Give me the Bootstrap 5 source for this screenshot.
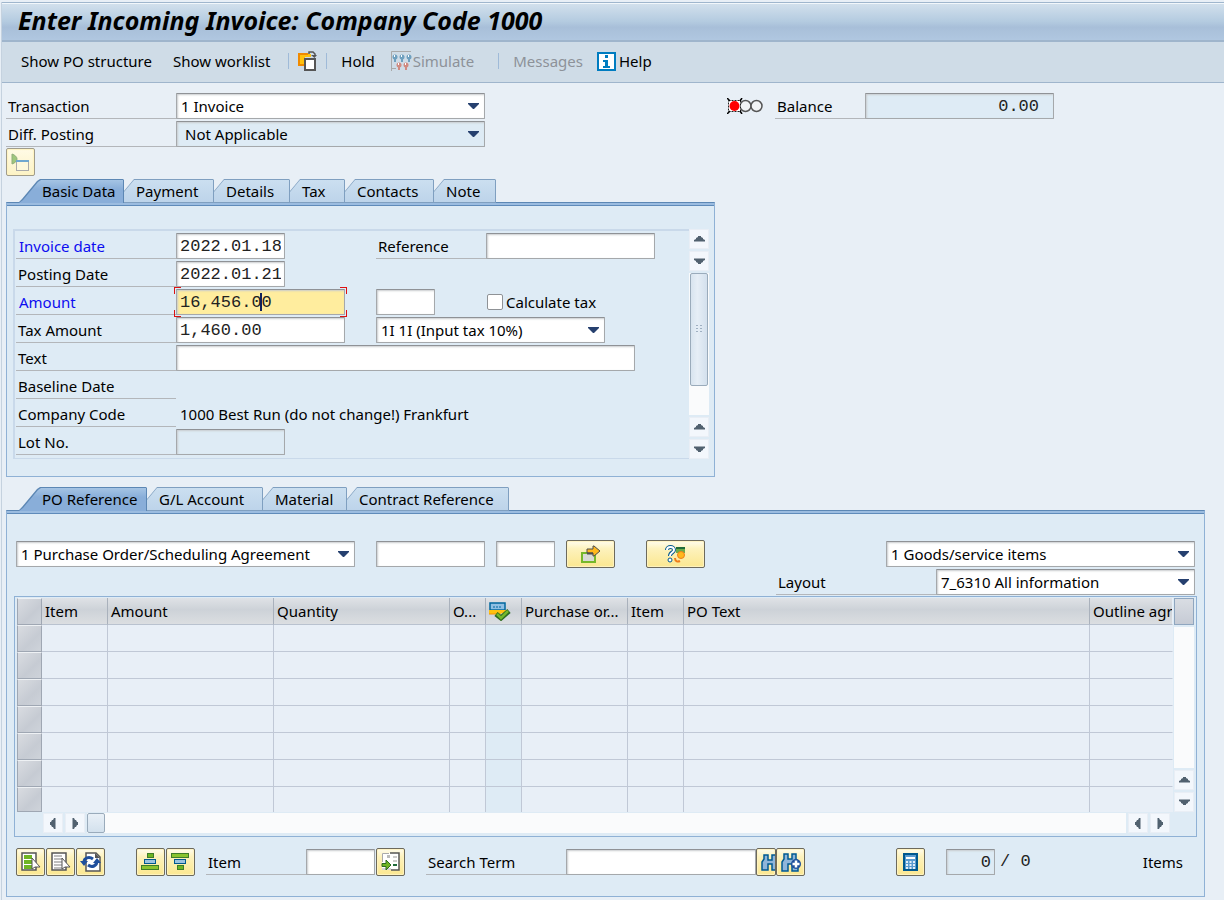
<!DOCTYPE html>
<html lang="en">
<head>
<meta charset="utf-8">
<meta name="viewport" content="width=device-width, initial-scale=1">
<title>Enter Incoming Invoice: Company Code 1000</title>
<link href="https://cdn.jsdelivr.net/npm/bootstrap@5.3.0/dist/css/bootstrap.min.css" rel="stylesheet">
<style>
:root{--ui:"Noto Sans","Open Sans",sans-serif;--num:"Liberation Mono",monospace;--line:#8fb1d5;--rule:#b3b6ba;--panel:#deebf5}
body{background:#e8eff6;color:#000;font:15px/20px var(--ui)}
svg{display:block;flex:none}
.frame{border-left:1px solid #c5d2df;margin-left:1px;padding-bottom:3px}
.titlebar{height:40px;margin-top:2px;padding:0 16px;border-top:1px solid #9fb6cd;border-bottom:2px solid #9fb5cc;box-shadow:inset 0 1px #f2f7fb;background:linear-gradient(#d3e1ed,#b4cbe0 50%,#a8bfd9 65%,#b0c7e0)}
.titlebar h1{font-size:25px;line-height:34px;font-weight:700;font-style:italic;margin:0}
.tools{height:41px;padding:0 0 2px 19px;background:#cfdce7;border-bottom:1px solid #9fb5cc}
.tool{border:0;background:none;padding:0;line-height:20px;color:#000;display:flex;align-items:center}
.tool:disabled{color:#8d9299}
.sep{width:1px;height:16px;background:#9fbad8}
.page{padding:10px 19px 0 4px}
.line{display:flex;height:26px;margin-bottom:2px}
.lab{border-bottom:1px solid var(--rule);padding-left:2px;height:26px;line-height:26px;flex:none;white-space:nowrap}
.lab.req{color:#0d0df0;padding-left:3px}
.plain{line-height:26px;padding-left:4px;white-space:nowrap}
.fld,.cmb{border:1px solid #a5a8ab;border-top-color:#8f9296;border-radius:1px;background-color:#fff;height:26px;padding:0 3px;box-shadow:inset 1px 1px 2px #c9cccf;color:#000;flex:none;outline:0;min-width:0}
.fld,.mono{font:17px/22px var(--num);color:#222}
.mono{line-height:28px}
.cmb{font:15px/22px var(--ui);appearance:none;padding:0 20px 0 4px;background:#fff url("data:image/svg+xml,%3Csvg xmlns='http://www.w3.org/2000/svg' width='11' height='6'%3E%3Cpath d='M0 0h11v1L6 6H5L0 1z' fill='%2326406f'/%3E%3C/svg%3E") no-repeat right 5px center}
.cmb:disabled{opacity:1;padding-left:8px}
.cmb:disabled,.ro{background-color:var(--panel)}
.bal{padding-right:14px}
.w49{width:49px}.w59{width:59px}.w69{width:69px}.w109{width:109px}.w169{width:169px}.w189{width:189px}.w190{width:190px}.w229{width:229px}.w259{width:259px}.w309{width:309px}.w339{width:339px}.w459{width:459px}
.l90{width:90px}.l100{width:100px}.l110{width:110px}.l140{width:140px}.l160{width:160px}.l170{width:170px}
.g1{margin-left:1px}.g3{margin-left:3px}.g5{margin-left:5px}.g9{margin-left:9px}.g11{margin-left:11px}.g14{margin-left:14px}.g18{margin-left:18px}.g21{margin-left:21px}.g31{margin-left:31px}.g91{margin-left:91px}.g242{margin-left:242px}
.tight{gap:1px}
.sbtn{width:29px;height:28px;flex:none;border:1px solid #6d6a5c;border-radius:2px;padding:0;display:flex;align-items:center;justify-content:center;background:linear-gradient(#fffdf0,#fdf2bd 30%,#fbe78f);box-shadow:inset 0 0 1px 1px #fff3c0}
.sbtn.pale{border-color:#a09c8b;background:linear-gradient(#fffbe6,#fcf3c6)}
.sbtn.w-go{width:49px}.sbtn.w-ask{width:59px}
.folder{margin-top:1px;margin-bottom:3px}
/* folder tabs: outline colour below, fill inset by one pixel above */
.strip{padding-left:12px;flex-wrap:nowrap}
.strip .nav-link{position:relative;isolation:isolate;height:24px;margin-bottom:-1px;border:0;border-radius:0;color:#000;line-height:24px;padding:0 0 0 12px;text-align:left;white-space:nowrap;background:#7f9fc0;clip-path:polygon(0 100%,0 12px,10px 0,calc(100% - 1px) 0,100% 1px,100% 100%)}
.strip .nav-link::before{content:"";position:absolute;inset:1px 1px 1px 0;z-index:-1;background:linear-gradient(#cbdff0,#bdd4ea);clip-path:polygon(0 100%,0 12px,10px 0,100% 0,100% 100%)}
.strip .nav-link.active{padding-left:24px;background:#5c87b4;clip-path:polygon(0 100%,4px 20px,19px 2px,22px 0,calc(100% - 1px) 0,100% 1px,100% 100%);z-index:2}
.strip .nav-link.active::before{background:linear-gradient(#a5c4e4,#89aed9 40%);inset:1px 1px 0 0;clip-path:polygon(1px 100%,5px 20px,20px 2px,23px 0,100% 0,100% 100%)}
.t55{width:55px}.t62{width:62px}.t76{width:76px}.t84{width:84px}.t89{width:89px}.t90{width:90px}.t106{width:106px}.t116{width:116px}.t129{width:129px}.t162{width:162px}
.pane{background:var(--panel);border:1px solid var(--line);border-top-color:#5c87b4;box-shadow:inset 0 2px #9bbce0,inset 0 3px #5f8bba}
.basic{max-width:709px;padding:26px 5px 17px 6px;margin-bottom:10px}
.inner{border:1px solid #c9d9ea;border-width:2px 0 1px 2px;padding:2px 0 3px 1px}
.inner .line{display:grid;grid-template-columns:160px 200px auto;justify-content:start}
.inner .line:last-child{margin-bottom:0}
.focus{position:relative;width:169px}
.focus .fld{background-color:#ffed9e}
.focus::before{content:"";position:absolute;inset:-2px;pointer-events:none;--r:#d11;background:linear-gradient(var(--r),var(--r)) 0 0/7px 1px,linear-gradient(var(--r),var(--r)) 0 0/1px 7px,linear-gradient(var(--r),var(--r)) 100% 0/7px 1px,linear-gradient(var(--r),var(--r)) 100% 0/1px 7px,linear-gradient(var(--r),var(--r)) 0 100%/7px 1px,linear-gradient(var(--r),var(--r)) 0 100%/1px 7px,linear-gradient(var(--r),var(--r)) 100% 100%/7px 1px,linear-gradient(var(--r),var(--r)) 100% 100%/1px 7px;background-repeat:no-repeat}
.focus::after{content:"";position:absolute;left:84px;top:4px;width:2px;height:18px;background:#10205c}
.chk{appearance:none;width:16px;height:16px;margin:0 3px 0 52px;border:1px solid #8f9296;border-radius:2px;background:#fff}
.sb{width:20px;gap:2px}
.arr{border:1px solid #e9eef5;background:#f3f7fc;width:20px;height:20px;padding:0;flex:none;display:flex;align-items:center;justify-content:center}
.track{background:#fafbfc}
.thumb{border:1px solid #9aabbb;border-radius:2px;background:linear-gradient(90deg,#d8e4ef,#e6eef6 40%,#d3e0ed);width:18px;margin-left:1px;height:113px;display:flex;align-items:center;justify-content:center}
.thumb.hz{margin:0;height:20px;background:linear-gradient(#e9f0f7,#d3e1ed)}
.hbar{gap:2px;padding:1px 24px 0 26px}
.po{padding:29px 9px 20px 9px}
.picks{padding:1px 0}
.box{border:1px solid var(--line);padding:1px 2px 3px 2px;margin:0 -2px 11px -2px}
.items{table-layout:fixed;width:100%;border-collapse:separate;border-spacing:0}
.items th{height:27px;padding:0 0 0 3px;font-weight:400;white-space:nowrap;overflow:hidden;border-right:1px solid #a9b1bc;border-bottom:1px solid #b9c2cf;background:linear-gradient(#dfe2e6,#cdd2d8 45%,#dbdee1)}
.items td{height:27px;padding:0;background:#e8eff7;border-right:1px solid #c0c8d6;border-bottom:1px solid #c0c8d6}
.items th:last-child,.items td:last-child{border-right-color:#e8eff7}
.items tr:last-child td{border-bottom:0;height:25px}
.items td.mk{background:#deebf5}
.items td.sel,.items th.sel{background:linear-gradient(135deg,#d9dce1,#c6cbd3 60%,#ced3da);border:1px solid #9fa7b3;border-top-color:#eef1f4}
.items tr:last-child td.sel{border-bottom:1px solid #9fa7b3}
.c0{width:25px}.c1{width:66px}.c2{width:166px}.c3{width:176px}.c4{width:36px}.c6{width:106px}.c7{width:56px}.c9{width:83px}
.corner{height:27px;border:1px solid #8fa6bf;background:linear-gradient(#d9dde3,#c6cbd5)}
.sbtn.cut{width:20px;overflow:hidden;justify-content:flex-start;padding-left:3px}
</style>
</head>
<body>
<svg width="0" height="0" class="position-absolute" aria-hidden="true">
<symbol id="up" viewBox="0 0 11 6"><path d="M0 5.500V4l2-1V2l2-1V0h3v1l2 1v1l2 1v1.500z" fill="#51616f"/></symbol>
<symbol id="dn" viewBox="0 0 11 6"><path d="M0 .5V2l2 1v1l2 1v1h3V5l2-1V3l2-1V.5z" fill="#51616f"/></symbol>
<symbol id="lt" viewBox="0 0 6 11"><path d="M5.500 0H4L3 2H2L1 4H0v3h1l1 2h1l1 2h1.500z" fill="#51616f"/></symbol>
<symbol id="rt" viewBox="0 0 6 11"><path d="M.5 0H2l1 2h1l1 2h1v3H5L4 9H3l-1 2H.5z" fill="#51616f"/></symbol>
</svg>
<div class="frame">
<header>
  <div class="titlebar"><h1>Enter Incoming Invoice: Company Code 1000</h1></div>
  <div class="tools d-flex align-items-center" role="toolbar">
    <button class="tool">Show PO structure</button>
    <button class="tool g21">Show worklist</button>
    <span class="sep g18"></span>
    <button class="tool g9" aria-label="Other invoice document">
      <svg width="20" height="22" viewBox="0 0 20 22"><path d="M1 4h12v3H7v8H1z" fill="#ffc20e"/><path d="M7 15H1V4h9" fill="none" stroke="#f08a00" stroke-width="2"/><rect x="7" y="9" width="10" height="11" fill="#fff" stroke="#555" stroke-width="2"/><path d="M11 4V2h4l2 2v2" fill="none" stroke="#555" stroke-width="1.500"/><path d="M13 5h6l-2.500 3z" fill="#555"/></svg></button>
    <span class="sep ms-2"></span>
    <button class="tool g14">Hold</button>
    <button class="tool ms-3" disabled>
      <svg width="22" height="20" viewBox="0 0 22 20"><path d="M.5 20V.5H20M0 17.500h5" fill="none" stroke="#a9a9a9"/><g fill="#6fa0bf"><circle cx="4" cy="6" r="2.500"/><circle cx="11" cy="6" r="2.500"/><circle cx="18" cy="6" r="2.500"/><path d="M3 8h2v3H3zM10 8h2v3h-2zM17 8h2v3h-2z"/></g><g fill="#d08a80"><circle cx="8" cy="14" r="2.500"/><circle cx="15" cy="14" r="2.500"/><path d="M7 16h2v3H7zM14 16h2v3h-2z"/></g><g fill="#fff"><path d="M3 4h1v2H3zM10 4h1v2h-1zM17 4h1v2h-1zM7 12h1v2H7zM14 12h1v2h-1z"/></g></svg>Simulate</button>
    <span class="sep ms-4"></span>
    <button class="tool g14" disabled>Messages</button>
    <button class="tool g14">
      <svg width="19" height="19" viewBox="0 0 19 19"><rect x="1" y="1" width="17" height="17" fill="#fff" stroke="#007cc0" stroke-width="2"/><path d="M8 3h3v3H8zM6 8h5v6h2v2H6v-2h2v-4H6z" fill="#007cc0"/></svg><span class="g3">Help</span></button>
  </div>
</header>
<main class="page">
  <div class="line">
    <label class="lab l170" for="trans">Transaction</label>
    <select id="trans" class="cmb w309"><option>1 Invoice</option></select>
    <svg class="align-self-center g242" width="37" height="16" viewBox="0 0 37 16"><circle cx="18.500" cy="8" r="5.500" fill="#f1f3f5" stroke="#555" stroke-width="1.500"/><circle cx="29.500" cy="8" r="5.500" fill="#f1f3f5" stroke="#555" stroke-width="1.500"/><rect x="1.500" y="2.500" width="12" height="11" fill="#fff" stroke="#222" stroke-dasharray="2 1"/><path d="M0 0l3 3M0 16l3-3M13 3l2-3M13 13l2 3" stroke="#000" stroke-width="1.500"/><circle cx="7.500" cy="8" r="5" fill="#f00"/></svg>
    <label class="lab l90 g11" for="bal">Balance</label>
    <input id="bal" class="fld ro w189 text-end bal" value="0.00" readonly>
  </div>
  <div class="line mb-0">
    <label class="lab l170" for="diff">Diff. Posting</label>
    <select id="diff" class="cmb w309" disabled><option>Not Applicable</option></select>
  </div>
  <button class="sbtn pale folder" aria-label="Show document header">
    <svg width="19" height="19" viewBox="0 0 19 19"><path d="M1 1c3 1 5 3 5 5S4 10 1 11z" fill="#9fc77c" stroke="#8fae7a"/><rect x="5.500" y="7.500" width="12" height="10" fill="#fdf8dc" stroke="#aaa"/><path d="M5 8h13" stroke="#6fa7d0" stroke-width="2"/></svg></button>

  <ul class="nav strip" role="tablist">
    <li><button class="nav-link active t106" role="tab">Basic Data</button></li>
    <li><button class="nav-link t90" role="tab">Payment</button></li>
    <li><button class="nav-link t76" role="tab">Details</button></li>
    <li><button class="nav-link t55" role="tab">Tax</button></li>
    <li><button class="nav-link t89" role="tab">Contacts</button></li>
    <li><button class="nav-link t62" role="tab">Note</button></li>
  </ul>
  <section class="pane basic d-flex">
    <div class="inner flex-grow-1">
      <div class="line"><label class="lab l160 req" for="invd">Invoice date</label><input id="invd" class="fld w109" value="2022.01.18">
        <div class="d-flex"><label class="lab l110" for="ref">Reference</label><input id="ref" class="fld w169"></div></div>
      <div class="line"><label class="lab l160" for="posd">Posting Date</label><input id="posd" class="fld w109" value="2022.01.21"></div>
      <div class="line"><label class="lab l160 req" for="amt">Amount</label><div class="focus"><input id="amt" class="fld w169" value="16,456.00"></div>
        <div class="d-flex align-items-center"><input class="fld w59" aria-label="Currency"><input type="checkbox" class="chk" id="calc"><label for="calc">Calculate tax</label></div></div>
      <div class="line"><label class="lab l160" for="tax">Tax Amount</label><input id="tax" class="fld w169" value="1,460.00">
        <select class="cmb w229" aria-label="Tax code"><option>1I 1I (Input tax 10%)</option></select></div>
      <div class="line"><label class="lab l160" for="txt">Text</label><input id="txt" class="fld w459"></div>
      <div class="line"><span class="lab l160">Baseline Date</span></div>
      <div class="line"><span class="lab l160">Company Code</span><span class="plain">1000 Best Run (do not change!) Frankfurt</span></div>
      <div class="line"><label class="lab l160" for="lot">Lot No.</label><input id="lot" class="fld ro w109" readonly></div>
    </div>
    <div class="sb d-flex flex-column">
      <button class="arr" aria-label="Scroll up"><svg width="11" height="6"><use href="#up"/></svg></button>
      <button class="arr" aria-label="Scroll down"><svg width="11" height="6"><use href="#dn"/></svg></button>
      <div class="track flex-grow-1"><div class="thumb"><svg width="7" height="9" viewBox="0 0 7 9" fill="#9fb0c2"><path d="M0 0h2v1H0zM4 0h2v1H4zM0 3h2v1H0zM4 3h2v1H4zM0 6h2v1H0zM4 6h2v1H4z"/></svg></div></div>
      <button class="arr" aria-label="Page up"><svg width="11" height="6"><use href="#up"/></svg></button>
      <button class="arr" aria-label="Page down"><svg width="11" height="6"><use href="#dn"/></svg></button>
    </div>
  </section>

  <ul class="nav strip" role="tablist">
    <li><button class="nav-link active t129" role="tab">PO Reference</button></li>
    <li><button class="nav-link t116" role="tab">G/L Account</button></li>
    <li><button class="nav-link t84" role="tab">Material</button></li>
    <li><button class="nav-link t162" role="tab">Contract Reference</button></li>
  </ul>
  <section class="pane po">
    <div class="d-flex align-items-start">
      <div class="d-flex align-items-center">
        <select class="cmb w339" aria-label="Reference document category"><option>1 Purchase Order/Scheduling Agreement</option></select>
        <input class="fld w109 g21" aria-label="Purchase order">
        <input class="fld w59 g11" aria-label="Order item">
        <button class="sbtn w-go g11" aria-label="Adopt">
          <svg width="20" height="18" viewBox="0 0 20 18"><rect x="1" y="8" width="13" height="9" fill="#d9dbd5" stroke="#76b82a" stroke-width="2"/><path d="M6 4h6V1h1l6 5-6 5h-1V8H6z" fill="#ffb81c" stroke="#4d4d4d"/><path d="M6 8.500h6" stroke="#4d4d4d" stroke-width="2"/></svg></button>
        <button class="sbtn w-ask g31" aria-label="More search criteria">
          <svg width="21" height="18" viewBox="0 0 21 18"><rect x="11" y="2" width="9" height="6" fill="#6aab4a"/><path d="M11 3h9" stroke="#1f6b3a" stroke-width="2"/><circle cx="16" cy="10" r="3.500" fill="#ffb81c" stroke="#ef7d1a"/><path d="M10 13c0 4 3 4 5 3" fill="none" stroke="#ef7d1a" stroke-width="2"/><path d="M2 5c0-4 7-4 7 0 0 3-4 2-4 6" fill="none" stroke="#00588f" stroke-width="4"/><path d="M2 5c0-4 7-4 7 0 0 3-4 2-4 6" fill="none" stroke="#fff" stroke-width="2"/><circle cx="5" cy="15" r="2" fill="#fff" stroke="#00588f"/></svg></button>
      </div>
      <div class="ms-auto d-flex flex-column align-items-end picks">
        <div class="line"><select class="cmb w309" aria-label="Item type"><option>1 Goods/service items</option></select></div>
        <div class="line mb-0"><label class="lab l160" for="lay">Layout</label><select id="lay" class="cmb w259"><option>7_6310 All information</option></select></div>
      </div>
    </div>
    <div class="box">
      <div class="d-flex tight">
        <div class="flex-grow-1 overflow-hidden">
        <table class="items">
          <colgroup><col class="c0"><col class="c1"><col class="c2"><col class="c3"><col class="c4"><col class="c4"><col class="c6"><col class="c7"><col><col class="c9"></colgroup>
          <thead><tr><th class="sel"></th><th>Item</th><th>Amount</th><th>Quantity</th><th>O...</th><th><svg width="22" height="19" viewBox="0 0 22 19"><rect x="1" y="1" width="15" height="7" fill="#8fbfe3" stroke="#00679e" stroke-width="1.500"/><path d="M4 5h9" stroke="#00679e" stroke-dasharray="2 1"/><path d="M0 8h17v4l-4-1-4 3H8l1-2H0z" fill="#ffc20e"/><path d="M0 12h8l3 5" fill="none" stroke="#f39200"/><path d="M7 12l5 4 8-7" fill="none" stroke="#2d6b1f" stroke-width="5"/><path d="M8 12l4 4 7-7" fill="none" stroke="#76b82a" stroke-width="2.500"/></svg></th><th>Purchase or...</th><th>Item</th><th>PO Text</th><th>Outline agr</th></tr></thead>
          <tbody>
            <tr><td class="sel"></td><td></td><td></td><td></td><td></td><td class="mk"></td><td></td><td></td><td></td><td></td></tr>
            <tr><td class="sel"></td><td></td><td></td><td></td><td></td><td class="mk"></td><td></td><td></td><td></td><td></td></tr>
            <tr><td class="sel"></td><td></td><td></td><td></td><td></td><td class="mk"></td><td></td><td></td><td></td><td></td></tr>
            <tr><td class="sel"></td><td></td><td></td><td></td><td></td><td class="mk"></td><td></td><td></td><td></td><td></td></tr>
            <tr><td class="sel"></td><td></td><td></td><td></td><td></td><td class="mk"></td><td></td><td></td><td></td><td></td></tr>
            <tr><td class="sel"></td><td></td><td></td><td></td><td></td><td class="mk"></td><td></td><td></td><td></td><td></td></tr>
            <tr><td class="sel"></td><td></td><td></td><td></td><td></td><td class="mk"></td><td></td><td></td><td></td><td></td></tr>
          </tbody>
        </table>
        </div>
        <div class="sb d-flex flex-column">
          <div class="corner"></div>
          <div class="track flex-grow-1"></div>
          <button class="arr" aria-label="Scroll up"><svg width="11" height="6"><use href="#up"/></svg></button>
          <button class="arr" aria-label="Scroll down"><svg width="11" height="6"><use href="#dn"/></svg></button>
        </div>
      </div>
      <div class="d-flex hbar">
        <button class="arr" aria-label="Scroll left"><svg width="6" height="11"><use href="#lt"/></svg></button>
        <button class="arr" aria-label="Scroll right"><svg width="6" height="11"><use href="#rt"/></svg></button>
        <div class="track flex-grow-1"><div class="thumb hz"></div></div>
        <button class="arr" aria-label="Page left"><svg width="6" height="11"><use href="#lt"/></svg></button>
        <button class="arr" aria-label="Page right"><svg width="6" height="11"><use href="#rt"/></svg></button>
      </div>
    </div>
    <div class="d-flex align-items-center">
      <div class="d-flex tight">
        <button class="sbtn" aria-label="Select all"><svg width="20" height="20" viewBox="0 0 20 20"><rect x="1" y="1" width="14" height="17" fill="#fff" stroke="#555" stroke-width="1.500"/><path d="M3 3h8v4H3zM3 8h8v4H3zM3 13h8v4H3z" fill="#6fb522"/><path d="M11 6v11l3-2h5z" fill="#fff" stroke="#555"/></svg></button>
        <button class="sbtn" aria-label="Deselect all"><svg width="20" height="20" viewBox="0 0 20 20"><rect x="1" y="1" width="14" height="17" fill="#fff" stroke="#555" stroke-width="1.500"/><path d="M3 4h8M3 7h8M3 10h8M3 13h8M3 16h8" stroke="#aaa" stroke-width="1.500"/><path d="M11 6v11l3-2h5z" fill="#fff" stroke="#555"/></svg></button>
        <button class="sbtn" aria-label="Refresh"><svg width="22" height="20" viewBox="0 0 22 20"><path d="M6 1h10l4 4v14H6z" fill="#fff" stroke="#555" stroke-width="1.500"/><path d="M15 1v5h5" fill="#555"/><path d="M4 10c0-4 5-6 9-3M17 9c0 5-5 7-9 4" fill="none" stroke="#1f4f9c" stroke-width="3"/><path d="M0 9h8l-4 5zM13 11h8l-4-5z" fill="#1f4f9c"/></svg></button>
      </div>
      <div class="d-flex tight g31">
        <button class="sbtn" aria-label="Sort ascending"><svg width="19" height="18" viewBox="0 0 19 18"><rect x="6.500" y=".5" width="6" height="4" fill="#6fb522" stroke="#3f7d2a"/><rect x="3.500" y="6.500" width="11" height="4" fill="#9cc3e0" stroke="#00588f"/><rect x=".5" y="12.500" width="17" height="4" fill="#8ac42e" stroke="#3f7d2a"/></svg></button>
        <button class="sbtn" aria-label="Sort descending"><svg width="19" height="18" viewBox="0 0 19 18"><rect x=".5" y=".5" width="17" height="4" fill="#8ac42e" stroke="#3f7d2a"/><rect x="3.500" y="6.500" width="11" height="4" fill="#9cc3e0" stroke="#00588f"/><rect x="6.500" y="12.500" width="6" height="4" fill="#6fb522" stroke="#3f7d2a"/></svg></button>
      </div>
      <label class="lab l100 g11" for="itm">Item</label><input id="itm" class="fld w69">
      <button class="sbtn g1" aria-label="Position"><svg width="20" height="20" viewBox="0 0 20 20"><path d="M1 1h17v17H1z" fill="#fff"/><path d="M1.500 10V1.500H8M1 17h9" fill="none" stroke="#aaa"/><path d="M10 18h8V1H9" fill="none" stroke="#555" stroke-width="1.500"/><path d="M12 5h4M12 9h4" stroke="#ccc" stroke-width="2"/><path d="M12 13h4" stroke="#1f6b3a" stroke-width="2"/><path d="M6 3h3v3H6z" fill="#bbb"/><path d="M1 11.500h4V8l5 5-5 5v-3.500H1z" fill="#6fb522" stroke="#2d6b1f"/></svg></button>
      <label class="lab l140 g21" for="srch">Search Term</label><input id="srch" class="fld w190">
      <button class="sbtn cut" aria-label="Find"><svg width="20" height="20" viewBox="0 0 20 20"><path d="M2 18v-8l2-3V3h4v5h4V3h4v4l2 3v8h-6v-6H8v6z" fill="#8fb5da" stroke="#005a92" stroke-width="1.500"/></svg></button>
      <button class="sbtn" aria-label="Find next"><svg width="22" height="21" viewBox="0 0 22 21"><path d="M2 19v-9l2-3V2h4v5h4V2h4v5l2 3v9h-6v-7H8v7z" fill="#8fb5da" stroke="#005a92" stroke-width="1.500"/><circle cx="16" cy="12" r="5" fill="#1f4f9c"/><path d="M12.500 12h7M16 8.500v7" stroke="#fff" stroke-width="2.500"/></svg></button>
      <button class="sbtn g91" aria-label="Calculator"><svg width="15" height="18" viewBox="0 0 15 18"><rect x="1" y="1" width="13" height="16" fill="#5b9bd0" stroke="#00588f" stroke-width="2"/><path d="M3 4h9v2H3z" fill="#fff"/><path d="M3 9h9M3 12h9M3 15h9" stroke="#e3eef8" stroke-width="2" stroke-dasharray="2 1.500"/></svg></button>
      <input class="fld ro w49 text-end g21" value="0" readonly aria-label="Current item">
      <span class="mono text-nowrap g5">/ 0</span>
      <span class="ms-auto pe-2 me-1">Items</span>
    </div>
  </section>
</main>
</div>
<script src="https://cdn.jsdelivr.net/npm/bootstrap@5.3.0/dist/js/bootstrap.bundle.min.js"></script>
</body>
</html>
